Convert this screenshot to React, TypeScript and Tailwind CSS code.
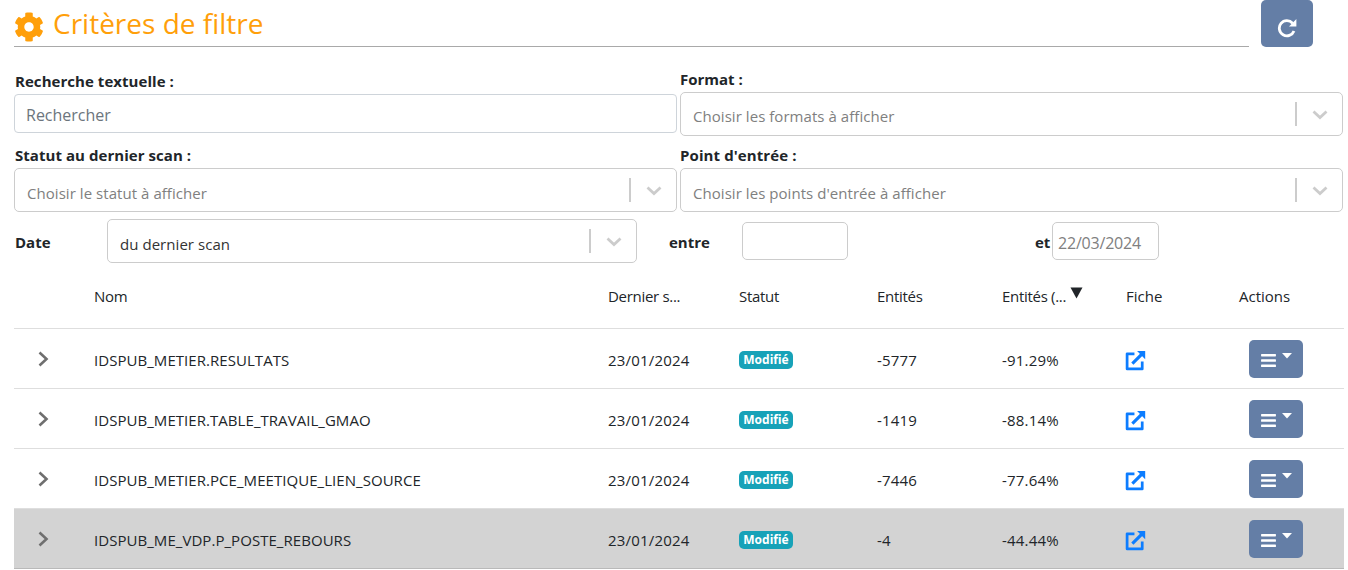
import React from "react";
import { FaCog, FaBars } from "react-icons/fa";

const font = { fontFamily: '"Open Sans", "Noto Sans", sans-serif' };

function Chevron() {
  return (
    <svg width="20" height="20" viewBox="0 0 20 20" className="text-[#cccccc]">
      <path d="M3.5 7.5 L10 13.5 L16.5 7.5" fill="none" stroke="currentColor" strokeWidth="2.8" />
    </svg>
  );
}

function Select({ text, dark, low, w }: { text: string; dark?: boolean; low?: boolean; w: string }) {
  return (
    <div className={`${w} h-11 flex items-center border border-[#cccccc] rounded-[5px] bg-white pl-[12px] shrink-0`}>
      <span className={`flex-1 text-[15px] tracking-[0.05px] truncate ${low ? "pt-[6px]" : "pt-[5px]"} ${dark ? "text-[#333333]" : "text-[#808080]"}`}>{text}</span>
      <span className="w-[2px] h-6 bg-[#cccccc]" />
      <span className="w-[45px] flex justify-center"><Chevron /></span>
    </div>
  );
}

function ExternalIcon() {
  return (
    <svg width="21" height="21" viewBox="0 0 20 20" fill="none" stroke="#0d7dff" strokeWidth="2.6">
      <path d="M9 3.6 H2 V18 H16.4 V11" strokeLinejoin="round" />
      <path d="M7 13 L17.5 2.5" strokeWidth="3" />
      <path d="M11.5 1 H19.2 V8.7 Z" fill="#0d7dff" stroke="none" />
    </svg>
  );
}

const rows = [
  ["IDSPUB_METIER.RESULTATS", "-5777", "-91.29%"],
  ["IDSPUB_METIER.TABLE_TRAVAIL_GMAO", "-1419", "-88.14%"],
  ["IDSPUB_METIER.PCE_MEETIQUE_LIEN_SOURCE", "-7446", "-77.64%"],
  ["IDSPUB_ME_VDP.P_POSTE_REBOURS", "-4", "-44.44%"],
];

export default function App() {
  return (
    <div style={font} className="w-[1348px] h-[570px] overflow-hidden bg-white text-[#212529] text-[15px] pl-[14px]">
      <div className="flex items-start">
        <div className="w-[1235px] h-[47px] border-b border-[#a9a9a9] flex items-center gap-[9px]">
          <FaCog size={30} color="#ff9f0a" className="mt-[7px]" />
          <span className="text-[28px] text-[#ff9f0a] leading-none">Critères de filtre</span>
        </div>
        <button className="ml-3 w-[52px] h-[47px] bg-[#647ea6] rounded-[5px] flex items-center justify-center pt-[8px]">
          <svg width="20" height="20" viewBox="0 0 20 20" fill="none" stroke="white" strokeWidth="2.8">
            <path d="M15.6 5.2 A7.6 7.6 0 1 0 17 13" />
            <path d="M19.4 1 V8.4 H12 Z" fill="white" stroke="none" />
          </svg>
        </button>
      </div>

      <div className="flex gap-[3px] mt-[22px]">
        <div className="w-[663px]">
          <div className="font-bold leading-5 mt-[2px] mb-[3px] pl-px tracking-[0.05px]">Recherche textuelle :</div>
          <div className="h-[39px] border border-[#ced4da] rounded-[4px] flex items-center px-[11px] pt-[2px] text-[16px] text-[#6c757d]">Rechercher</div>
        </div>
        <div className="w-[663px]">
          <div className="font-bold leading-5 mb-[3px]">Format :</div>
          <Select text="Choisir les formats à afficher" w="w-[663px]" />
        </div>
      </div>

      <div className="flex gap-[3px] mt-[8px]">
        <div className="w-[663px]">
          <div className="font-bold leading-5 mt-[1px] mb-[3px] pl-px tracking-[0.05px]">Statut au dernier scan :</div>
          <Select low text="Choisir le statut à afficher" w="w-[663px]" />
        </div>
        <div className="w-[663px]">
          <div className="font-bold leading-5 mt-[1px] mb-[3px] tracking-[0.1px]">Point d'entrée :</div>
          <Select low text="Choisir les points d'entrée à afficher" w="w-[663px]" />
        </div>
      </div>

      <div className="flex items-center mt-[7px] h-11">
        <span className="w-[93px] font-bold pl-px pt-[3px]">Date</span>
        <Select low text="du dernier scan" dark w="w-[530px]" />
        <span className="ml-[32px] w-[73px] font-bold pt-[3px]">entre</span>
        <div className="w-[106px] h-[38px] border border-[#cccccc] rounded-[5px]" />
        <span className="ml-[187px] w-[17px] font-bold pt-[3px]">et</span>
        <div className="w-[107px] h-[38px] border border-[#cccccc] rounded-[5px] flex items-center pl-[5px] pt-[3px] text-[16px] tracking-[-0.2px] text-[#808080]">22/03/2024</div>
      </div>

      <table className="w-[1330px] table-fixed border-collapse mt-[7px]">
        <colgroup>
          <col className="w-[68px]" />
          <col className="w-[514px]" />
          <col className="w-[131px]" />
          <col className="w-[138px]" />
          <col className="w-[125px]" />
          <col className="w-[124px]" />
          <col className="w-[113px]" />
          <col className="w-[117px]" />
        </colgroup>
        <thead>
          <tr className="h-[58px] border-b border-[#dedede] text-left tracking-[-0.3px]">
            <th />
            <th className="font-normal pl-[12px] pb-[5px]">Nom</th>
            <th className="font-normal pl-3 pb-[5px]">Dernier s...</th>
            <th className="font-normal pl-3 pb-[5px]">Statut</th>
            <th className="font-normal pl-3 pb-[5px]">Entités</th>
            <th className="font-normal pl-3 pb-[5px]">
              <span className="inline-flex items-start">Entités (...
                <svg width="13" height="12" viewBox="0 0 13 12" className="ml-[4px] mt-[2px]"><path d="M0.5 0.5 H12.5 L6.5 11.5 Z" fill="#212529" /></svg>
              </span>
            </th>
            <th className="font-normal pl-3 pb-[5px] tracking-normal">Fiche</th>
            <th className="font-normal pl-3 pb-[5px] tracking-normal">Actions</th>
          </tr>
        </thead>
        <tbody>
          {rows.map((r, i) => (
            <tr key={r[0]} className={`h-[60px] border-b ${i === 3 ? "bg-[#d3d3d3] border-[#b9b9b9]" : "border-[#dedede]"}`}>
              <td className="pl-[24px] pt-[2px]">
                <svg width="12" height="16" viewBox="0 0 12 16" fill="none" stroke="#6f6f6f" strokeWidth="2.6"><path d="M1.5 1.5 L8.5 8 L1.5 14.5" /></svg>
              </td>
              <td className="pl-[12px] pt-[4px] tracking-[0.05px]">{r[0]}</td>
              <td className="pl-3 pt-[4px] tracking-[0.2px]">23/01/2024</td>
              <td className="pl-3">
                <span className="inline-flex items-center justify-center w-[54px] h-[18px] rounded-[5px] bg-[#17a2b8] text-white text-[12px] font-bold leading-none">Modifié</span>
              </td>
              <td className="pl-3 pt-[4px] tracking-[0.2px]">{r[1]}</td>
              <td className="pl-3 pt-[4px] tracking-[0.2px]">{r[2]}</td>
              <td className="pl-[11px] pt-[5px]"><ExternalIcon /></td>
              <td className="pl-[22px] pt-[1px]">
                <button className="w-[54px] h-[38px] bg-[#647ea6] rounded-[5px] flex items-center justify-center gap-[5px] text-white">
                  <FaBars size={17} className="mt-[3px]" />
                  <svg width="10" height="6" viewBox="0 0 10 6" className="mb-[5px]"><path d="M0 0 H10 L5 5.5 Z" fill="white" /></svg>
                </button>
              </td>
            </tr>
          ))}
        </tbody>
      </table>
    </div>
  );
}
